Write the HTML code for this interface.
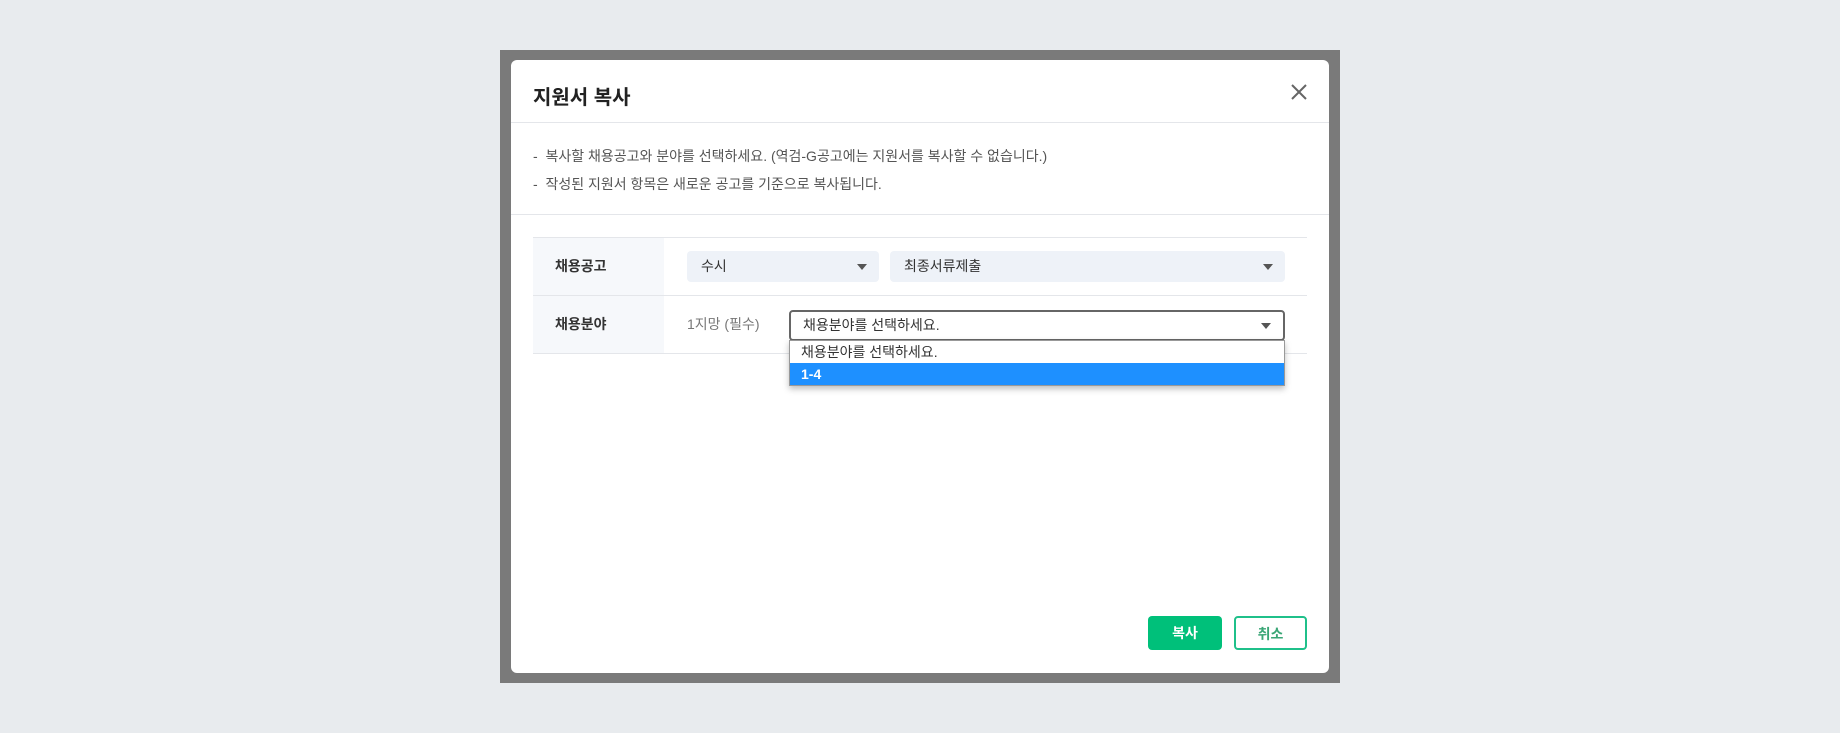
<!DOCTYPE html>
<html><head><meta charset="utf-8"><style>
*{box-sizing:border-box;margin:0;padding:0}
body{width:1840px;height:733px;background:#e8ebee;position:relative;font-family:"Liberation Sans","Noto Sans CJK KR",sans-serif;overflow:hidden}
.frame{position:absolute;left:500px;top:50px;width:840px;height:633px;background:#7a7a7a}
.modal{position:absolute;left:511px;top:60px;width:818px;height:613px;background:#fff;border-radius:6px}
.title{position:absolute;left:22px;top:21px;font-size:20px;font-weight:bold;color:#222}
.x{position:absolute;left:778px;top:22px}
.hr{position:absolute;left:0;width:818px;height:1px;background:#e4e6ea}
.b{position:absolute;left:22px;font-size:14px;color:#555}
.tbl{position:absolute;left:22px;top:177px;width:774px;height:117px;border-top:1px solid #e4e6ea}
.row{position:absolute;left:0;width:774px;height:58px;border-bottom:1px solid #e4e6ea}
.lab{position:absolute;left:0;top:0;width:131px;height:100%;background:#f6f8fb;font-size:14px;font-weight:bold;color:#333;padding-left:22px;line-height:57px}
.sel{position:absolute;height:31px;background:#eef2f8;border-radius:4px;font-size:14px;color:#333;padding-left:14px;line-height:31px}
.arr{position:absolute;right:12px;top:13px;width:0;height:0;border-left:5px solid transparent;border-right:5px solid transparent;border-top:6px solid #555}
.btn{position:absolute;top:556px;height:34px;border-radius:4px;font-size:14px;font-weight:bold;text-align:center;line-height:32px}
</style></head><body>
<div class="frame"></div>
<div class="modal">
<div class="title">지원서 복사</div>
<svg class="x" width="20" height="20" viewBox="0 0 20 20"><path d="M3 3L17 17M17 3L3 17" stroke="#666" stroke-width="2"/></svg>
<div class="hr" style="top:62px"></div>
<div class="b" style="top:86px">- &nbsp;복사할 채용공고와 분야를 선택하세요. (역검-G공고에는 지원서를 복사할 수 없습니다.)</div>
<div class="b" style="top:114px">- &nbsp;작성된 지원서 항목은 새로운 공고를 기준으로 복사됩니다.</div>
<div class="hr" style="top:154px"></div>
<div class="tbl">
<div class="row" style="top:0"><div class="lab">채용공고</div>
<div class="sel" style="left:154px;top:13px;width:192px">수시<div class="arr"></div></div>
<div class="sel" style="left:357px;top:13px;width:395px">최종서류제출<div class="arr"></div></div>
</div>
<div class="row" style="top:58px"><div class="lab">채용분야</div>
<div style="position:absolute;left:154px;top:0;line-height:57px;font-size:14px;color:#777">1지망 (필수)</div>
<div class="sel" style="left:256px;top:14px;width:496px;background:#fff;border:2px solid #666;line-height:27px;padding-left:12px">채용분야를 선택하세요.<div class="arr" style="top:11px"></div></div>
</div>
</div>
<div style="position:absolute;left:278px;top:280px;width:496px;height:46px;background:#fff;border:1px solid #999;box-shadow:0 3px 6px rgba(0,0,0,.25);font-size:14px">
<div style="height:22px;line-height:22px;padding-left:11px;color:#333">채용분야를 선택하세요.</div>
<div style="height:22px;line-height:22px;padding-left:11px;color:#fff;background:#1e90ff;font-weight:bold">1-4</div>
</div>
<div class="btn" style="left:637px;width:74px;background:#00c07a;color:#fff;line-height:34px">복사</div>
<div class="btn" style="left:723px;width:73px;border:2px solid #1fc08a;color:#3aa676">취소</div>
</div>
</body></html>
